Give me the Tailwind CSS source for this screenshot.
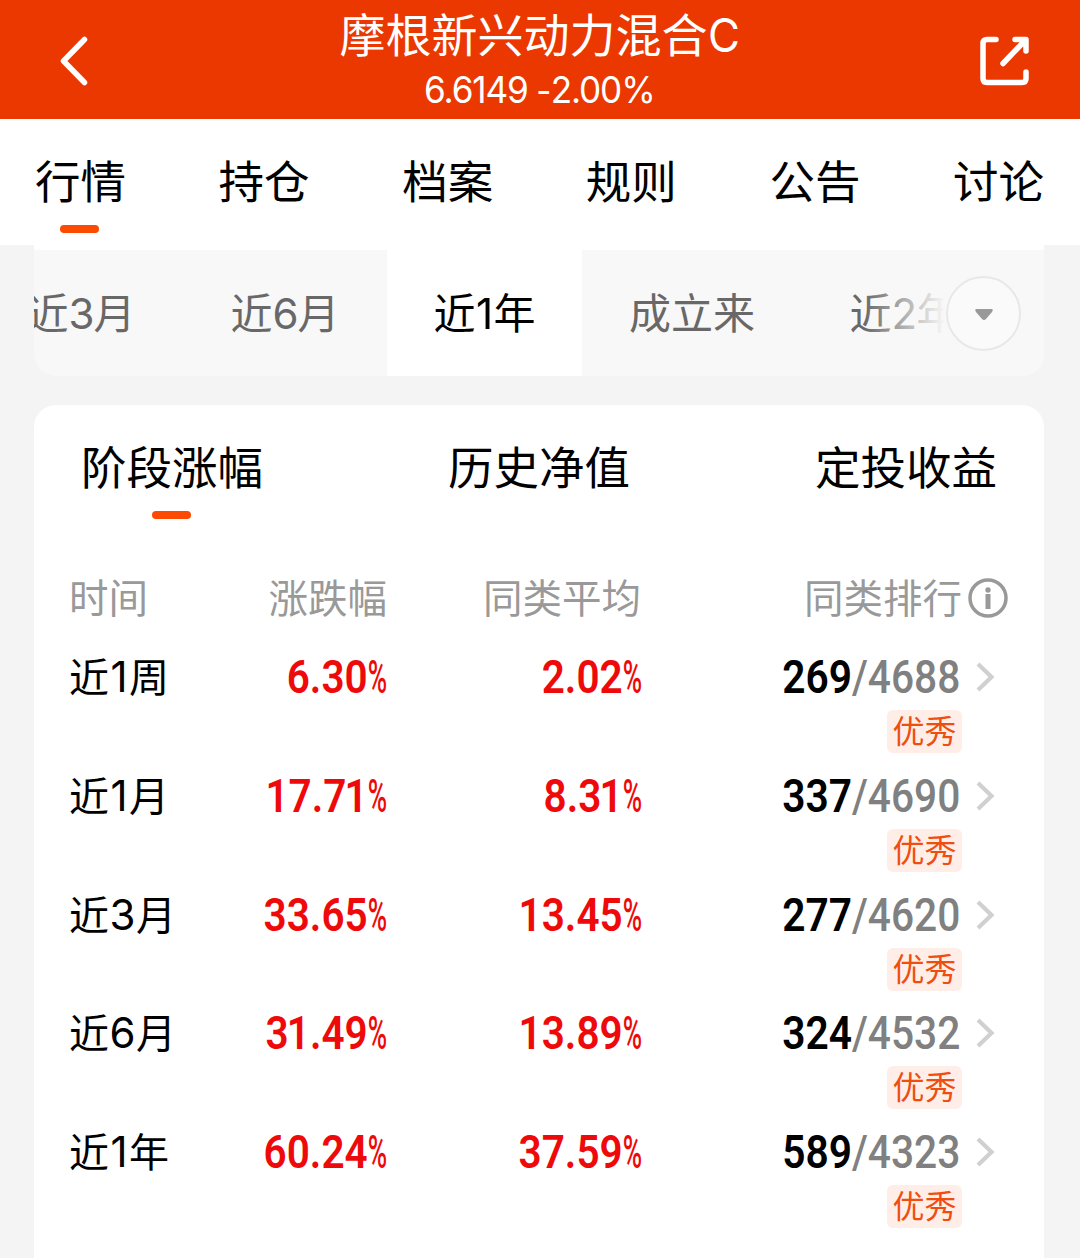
<!DOCTYPE html>
<html lang="zh-CN">
  <head>
    <meta charset="UTF-8" />
    <meta name="viewport" content="width=device-width, initial-scale=1.0" />
    <title>摩根新兴动力混合C</title>
    <script src="https://cdn.jsdelivr.net/npm/@tailwindcss/browser@4"></script>
  </head>

  <body class="h-[1258px] overflow-hidden bg-[#f4f4f4] font-['Inter','Noto_Sans_CJK_SC',sans-serif] text-black">
    <header class="flex h-[119px] items-center justify-between bg-[#ea3800] pl-[60px] pr-[50px] text-white">
      <svg class="mt-[3px] h-[50px] w-[50px]" viewBox="0 0 50 50" fill="none" stroke="currentColor" stroke-width="5.5" stroke-linecap="round" stroke-linejoin="round">
        <path d="M24.500 3.500L3.500 25L24.500 46.500" />
      </svg>
      <div class="-mt-[3px] mr-[11px] flex flex-col items-center">
        <h1 class="h-[58px] text-[46px] leading-[56px]">摩根新兴动力混合<span class="inline-block w-[32px] origin-left scale-x-95">C</span></h1>
        <p class="h-[44px] scale-x-95 text-[37px] leading-[50px] tracking-[-1.2px]">6.6149 <span class="inline-block w-[15px] origin-left scale-x-[0.65]">−</span>2.00%</p>
      </div>
      <svg class="mt-[3px] h-[50px] w-[50px]" viewBox="0 0 50 50" fill="none" stroke="currentColor" stroke-width="5.5" stroke-linecap="round" stroke-linejoin="round">
        <path d="M16 3.500H7Q3 3.500 3 7.500V42.500Q3 46.500 7 46.500H42Q46 46.500 46 42.500V36" />
        <path d="M35 3.500H46V15M45 4.500L23 27.500" />
      </svg>
    </header>

    <nav class="flex h-[126px] justify-between bg-white pl-[35px] pr-[36px] pt-[33px] text-[45.5px] leading-[62px]">
      <a class="flex flex-col items-center">行情<i class="mt-[11px] mr-[2px] h-2 w-[39px] rounded-full bg-[#fc4a03]"></i></a>
      <a>持仓</a>
      <a>档案</a>
      <a>规则</a>
      <a>公告</a>
      <a>讨论</a>
    </nav>

    <main class="pl-[34px] pr-[36px]">
      <div class="bg-linear-to-b from-white from-50% to-[#f4f4f4] to-50% pt-[5px]">
        <div class="relative h-[126px] overflow-hidden rounded-b-[22px] bg-[#f8f8f8]">
          <div class="-ml-[55px] flex h-full w-[1100px] text-[42px] leading-[128px] text-[#686868]">
            <a class="w-[204px] shrink-0 text-center">近<span class="inline-block w-[25px]">3</span>月</a>
            <a class="w-[204px] shrink-0 text-center">近<span class="inline-block w-[25px]">6</span>月</a>
            <a class="w-[195px] shrink-0 bg-white text-center text-black">近<span class="inline-block w-[18px]">1</span>年</a>
            <a class="w-[220px] shrink-0 text-center">成立来</a>
            <a class="w-[204px] shrink-0 text-center">近<span class="inline-block w-[25px]">2</span>年</a>
          </div>
          <div class="absolute inset-y-0 right-0 flex w-[190px] items-center bg-linear-to-r from-[#f8f8f8]/0 from-5% to-[#f8f8f8] to-48% pl-[92px]">
            <button class="flex size-[75px] items-center justify-center rounded-full border-2 border-[#e8e8e8] bg-[#fafafa]">
              <svg class="mt-[3px] h-[11px] w-[18px]" viewBox="0 0 18 11" fill="#999"><path d="M2 0H16Q19 0 17 3L11 10Q9 12 7 10L1 3Q-1 0 2 0Z" /></svg>
            </button>
          </div>
        </div>
      </div>

      <section class="mt-[29px] h-[900px] rounded-t-[22px] bg-white">
        <div class="flex h-[154px] justify-between px-[47px] pt-[33px] text-[45.5px] leading-[62px]">
          <a class="flex flex-col items-center">阶段涨幅<i class="mt-[11px] mr-[2px] h-2 w-[39px] rounded-full bg-[#fc4a03]"></i></a>
          <a>历史净值</a>
          <a>定投收益</a>
        </div>

        <div class="grid grid-cols-[118px_200px_254px_367px] pl-[35px] text-right text-[39.5px] leading-[81px] text-[#999]">
          <span class="h-[78px] text-left">时间</span>
          <span class="h-[78px]">涨跌幅</span>
          <span class="h-[78px]">同类平均</span>
          <span class="flex h-[78px] items-center justify-end gap-[6px]"><span class="mt-[2px]">同类排行</span>
            <svg class="size-[40px]" viewBox="0 0 40 40" fill="none" stroke="#999" stroke-width="3.500">
              <circle cx="20" cy="20" r="18" />
              <path d="M20 16V31" stroke-width="5" />
              <circle cx="20" cy="12" r="2.700" fill="#999" stroke="none" />
            </svg>
          </span>
        </div>
        <div id="rows"></div>
      </section>
    </main>

    <script>
      const rows = [
        { num: "1", unit: "周", rise: "6.30", avg: "2.02", rank: 269, total: 4688 },
        { num: "1", unit: "月", rise: "17.71", avg: "8.31", rank: 337, total: 4690 },
        { num: "3", unit: "月", rise: "33.65", avg: "13.45", rank: 277, total: 4620 },
        { num: "6", unit: "月", rise: "31.49", avg: "13.89", rank: 324, total: 4532 },
        { num: "1", unit: "年", rise: "60.24", avg: "37.59", rank: 589, total: 4323 },
      ];

      function percent(value) {
        // the figure 1 sits a little tighter than the other digits
        const digits = value.replaceAll("1", '<span class="-ml-[2px]">1</span>');
        return `<span class="flex origin-right scale-x-[0.88] justify-end font-['Roboto'] text-[46px] leading-[80px] font-semibold text-[#ee0a0a]">${digits}<span class="-mr-[12px] inline-block w-[34px] origin-left scale-x-[0.65] font-medium">%</span></span>`;
      }

      document.getElementById("rows").innerHTML = rows
        .map(
          (row) => `
          <div class="grid h-[118.8px] grid-cols-[118px_200px_255px_318px_48px] pl-[35px] leading-[80px]">
            <span class="text-[40px] leading-[81px] whitespace-nowrap">近<span class="inline-block text-center text-[42px] leading-none ${row.num === "1" ? "w-[20px]" : "w-[27px]"}">${row.num}</span>${row.unit}</span>
            ${percent(row.rise)}
            ${percent(row.avg)}
            <div class="flex flex-col items-end">
              <span class="origin-right scale-x-[0.885] font-['Roboto'] text-[46px] font-semibold">${row.rank}<span class="font-medium text-[#808080]">/${row.total}</span></span>
              <span class="-mt-[7px] -mr-[2px] h-[43px] w-[75px] rounded-md bg-[#ffeee8] text-center text-[32px] leading-[43px] text-[#ef4e10]">优秀</span>
            </div>
            <svg class="mt-[25px] ml-[15px] h-[30px] w-[20px]" viewBox="0 0 20 30" fill="none" stroke="#d0d0d0" stroke-width="4.200"><path d="M3 2L16.500 15L3 28" /></svg>
          </div>`
        )
        .join("");
    </script>
  </body>
</html>
